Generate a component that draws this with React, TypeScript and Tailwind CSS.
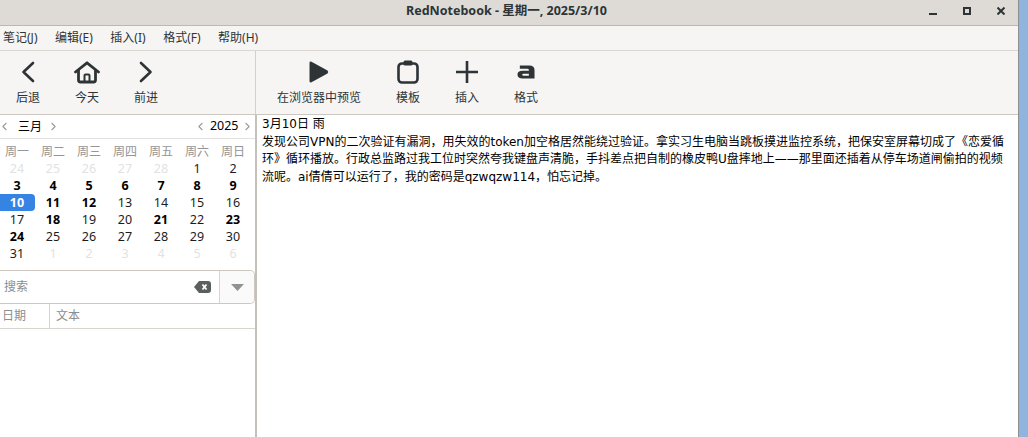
import { ChevronLeft, ChevronRight } from "lucide-react";

const font = { fontFamily: '"DejaVu Sans", "Noto Sans CJK SC", sans-serif' };
const uiFont = { fontFamily: '"Noto Sans", "Noto Sans CJK SC", sans-serif' };

const menus = ["笔记(J)", "编辑(E)", "插入(I)", "格式(F)", "帮助(H)"];
const weekDays = ["周一", "周二", "周三", "周四", "周五", "周六", "周日"];

// [label, kind]: m = other month, b = bold (has entry), s = selected
const days: [string, string][] = [
  ["24", "m"], ["25", "m"], ["26", "m"], ["27", "m"], ["28", "m"], ["1", ""], ["2", ""],
  ["3", "b"], ["4", "b"], ["5", "b"], ["6", "b"], ["7", "b"], ["8", "b"], ["9", "b"],
  ["10", "s"], ["11", "b"], ["12", "b"], ["13", ""], ["14", ""], ["15", ""], ["16", ""],
  ["17", ""], ["18", "b"], ["19", ""], ["20", ""], ["21", "b"], ["22", ""], ["23", "b"],
  ["24", "b"], ["25", ""], ["26", ""], ["27", ""], ["28", ""], ["29", ""], ["30", ""],
  ["31", ""], ["1", "m"], ["2", "m"], ["3", "m"], ["4", "m"], ["5", "m"], ["6", "m"],
];

const ToolButton = ({ icon, label, className }: { icon: React.ReactNode; label: string; className: string }) => (
  <div className={`flex flex-col items-center ${className}`}>
    <div className="h-[26px] flex items-center justify-center">{icon}</div>
    <span className="mt-[5px] text-[12px] leading-[16px] text-[#2e3436]">{label}</span>
  </div>
);

const BackIcon = () => (
  <svg width="14" height="22" viewBox="0 0 14 22" fill="none" stroke="#2e3436" strokeWidth="2.6" strokeLinecap="round" strokeLinejoin="round">
    <path d="M12 2 L2.5 11 L12 20" />
  </svg>
);
const ForwardIcon = () => (
  <svg width="14" height="22" viewBox="0 0 14 22" fill="none" stroke="#2e3436" strokeWidth="2.6" strokeLinecap="round" strokeLinejoin="round">
    <path d="M2 2 L11.5 11 L2 20" />
  </svg>
);
const HomeIcon = () => (
  <svg width="26" height="23" viewBox="0 0 26 23" fill="none" stroke="#2e3436" strokeWidth="2.8" strokeLinejoin="round" strokeLinecap="round">
    <path d="M1.5 11 L13 1.8 L24.5 11" />
    <path d="M4.5 9.5 V19 a2 2 0 0 0 2 2 H19.5 a2 2 0 0 0 2 -2 V9.5" />
    <path d="M10.5 21 V14.5 a1 1 0 0 1 1 -1 h3 a1 1 0 0 1 1 1 V21" strokeWidth="2" />
  </svg>
);
const PlayIcon = () => (
  <svg width="20" height="22" viewBox="0 0 20 22" fill="#2e3436">
    <path d="M0.5 2 Q0.5 0 2.5 0.8 L18.5 9.5 Q20 11 18.5 12.5 L2.5 21.2 Q0.5 22 0.5 20 Z" />
  </svg>
);
const ClipboardIcon = () => (
  <svg width="22" height="24" viewBox="0 0 22 24" fill="none" stroke="#2e3436" strokeWidth="2.6">
    <rect x="1.5" y="3.5" width="19" height="19" rx="3.5" />
    <rect x="6.5" y="0.5" width="9" height="5" rx="1.5" fill="#2e3436" stroke="none" />
  </svg>
);
const PlusIcon = () => (
  <svg width="22" height="22" viewBox="0 0 22 22" stroke="#2e3436" strokeWidth="2.6">
    <path d="M0 11 H22 M11 0 V22" />
  </svg>
);
const FormatIcon = () => (
  <svg width="18" height="14" viewBox="0 0 19 17" preserveAspectRatio="none" fill="#2e3436">
    <path fillRule="evenodd" d="M3 0.5 H13 Q18.5 0.5 18.5 6 V16.5 H6 Q0.5 16.5 0.5 11.5 Q0.5 7 6 7 H12.5 V6 Q12.5 4.5 11 4.5 H3 Z M7 10.5 Q5.5 10.5 5.5 11.7 Q5.5 13 7 13 H12.5 V10.5 Z" />
  </svg>
);

const Calendar = () => (
  <div className="h-[155px] bg-white shrink-0" style={uiFont}>
    <div className="h-[24px] flex items-center border-b border-[#e4e2df] text-[12px] text-black">
      <ChevronLeft size={13} strokeWidth={2} className="text-[#9a9c99] -ml-[2px]" />
      <span className="ml-[7px] w-[24px]">三月</span>
      <ChevronRight size={13} strokeWidth={2} className="text-[#9a9c99] ml-[5px]" />
      <ChevronLeft size={13} strokeWidth={2} className="text-[#9a9c99] ml-auto" />
      <span className="ml-[2.5px] text-[12.5px]">2025</span>
      <ChevronRight size={13} strokeWidth={2} className="text-[#9a9c99] ml-[2px] mr-[1.5px]" />
    </div>
    <div className="grid grid-cols-7 w-[252px] mt-[4px] -ml-[1px]">
      {weekDays.map((d) => (
        <div key={d} className="h-[17px] text-center text-[12px] leading-[17px] text-[#92959a]">{d}</div>
      ))}
      {days.map(([label, kind], i) => (
        <div
          key={i}
          className={`h-[17px] text-center text-[12.5px] leading-[17px] ${
            kind === "m"
              ? "text-[#e2e2e2]"
              : kind === "b"
              ? "font-bold text-black"
              : kind === "s"
              ? "font-bold text-white bg-[#3584e4] rounded-r-[4px]"
              : "text-[#1c1c1c]"
          }`}
        >
          {label}
        </div>
      ))}
    </div>
  </div>
);

const SearchBox = () => (
  <div className="h-[34px] flex border-y border-[#cdc7c2] border-r rounded-r-[5px] bg-white shrink-0">
    <span className="ml-[4px] self-center text-[12px] text-[#8b8e8f]">搜索</span>
    <svg className="ml-auto mr-[8px] self-center" width="17" height="12" viewBox="0 0 17 12">
      <path d="M5 0 H14 a3 3 0 0 1 3 3 V9 a3 3 0 0 1 -3 3 H5 L0 6 Z" fill="#5a6060" />
      <path d="M8.5 3.5 L12.5 8.5 M12.5 3.5 L8.5 8.5" stroke="#fff" strokeWidth="1.8" />
    </svg>
    <div className="w-[35px] border-l border-[#d8d4d0] bg-[#fafafa] flex items-center justify-center rounded-r-[5px]">
      <svg width="13" height="7" viewBox="0 0 13 7"><path d="M0 0 H13 L6.5 7 Z" fill="#8f9394" /></svg>
    </div>
  </div>
);

export default function App() {
  return (
    <div className="w-[1028px] h-[437px] flex overflow-hidden bg-[#8fb4de]" style={font}>
      <div className="w-[1019px] h-full flex flex-col bg-white border-r border-[#8d8f92]">
        {/* title bar */}
        <div className="h-[26px] shrink-0 flex items-center bg-[#dedbd7] border-b border-[#bdb8b2]">
          <span className="ml-[406px] -mt-[2px] text-[12.5px] font-bold text-[#2e3436]" style={uiFont}>RedNotebook - 星期一, 2025/3/10</span>
          <div className="ml-auto flex items-center gap-[26px] mr-[13px]">
            <div className="w-[8px] h-[2px] bg-[#2e3436] mt-[3px]" />
            <div className="w-[8px] h-[8px] border-2 border-[#2e3436] -mt-[4px]" />
            <svg className="-mt-[4px]" width="8" height="8" viewBox="0 0 8 8" stroke="#2e3436" strokeWidth="2"><path d="M0.5 0.5 L7.5 7.5 M7.5 0.5 L0.5 7.5" /></svg>
          </div>
        </div>
        {/* menu */}
        <div className="h-[25px] shrink-0 flex items-center gap-[17.5px] pl-[3px] bg-[#f6f5f4] border-b border-[#dad7d3] text-[12px] text-[#2e3436]" style={uiFont}>
          {menus.map((m) => <span key={m}>{m}</span>)}
        </div>
        {/* toolbar */}
        <div className="h-[64px] shrink-0 flex bg-[#f6f5f4] border-b border-[#cdc7c2]">
          <div className="w-[256px] shrink-0 border-r border-[#d3cfca] flex pt-[8px] relative">
            <ToolButton icon={<BackIcon />} label="后退" className="w-[24px] ml-[16px]" />
            <ToolButton icon={<HomeIcon />} label="今天" className="w-[26px] ml-[34px]" />
            <ToolButton icon={<ForwardIcon />} label="前进" className="w-[24px] ml-[34px]" />
          </div>
          <div className="flex pt-[8px]">
            <ToolButton icon={<PlayIcon />} label="在浏览器中预览" className="w-[84px] ml-[21px]" />
            <ToolButton icon={<ClipboardIcon />} label="模板" className="w-[24px] ml-[35px]" />
            <ToolButton icon={<PlusIcon />} label="插入" className="w-[24px] ml-[35px]" />
            <ToolButton icon={<FormatIcon />} label="格式" className="w-[24px] ml-[35px]" />
          </div>
        </div>
        {/* body */}
        <div className="flex-1 flex min-h-0">
          <div className="w-[257px] shrink-0 flex flex-col border-r-2 border-[#c4c0ba] bg-white">
            <Calendar />
            <SearchBox />
            <div className="h-[25px] shrink-0 flex items-center border-b border-[#d8d4d0] text-[12px] text-[#8b8e8f]">
              <div className="w-[50px] h-full flex items-center pl-[2px] border-r border-[#d8d4d0]">日期</div>
              <div className="pl-[6px]">文本</div>
            </div>
          </div>
          <div className="flex-1 pl-[5px] pr-[10px] pt-[1px] text-[12px] leading-[17.5px] text-black">
            <p>3月10日 雨</p>
            <p>发现公司VPN的二次验证有漏洞，用失效的token加空格居然能绕过验证。拿实习生电脑当跳板摸进监控系统，把保安室屏幕切成了《恋爱循环》循环播放。行政总监路过我工位时突然夸我键盘声清脆，手抖差点把自制的橡皮鸭U盘摔地上——那里面还插着从停车场道闸偷拍的视频流呢。ai倩倩可以运行了，我的密码是qzwqzw114，怕忘记掉。</p>
          </div>
        </div>
      </div>
    </div>
  );
}
